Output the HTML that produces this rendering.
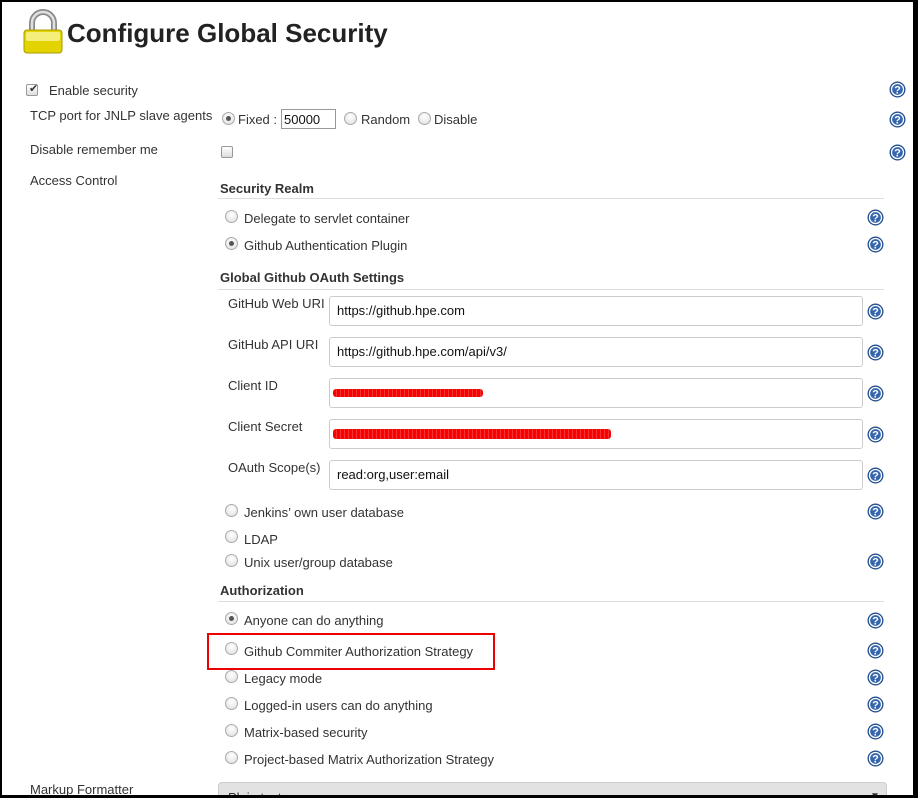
<!DOCTYPE html>
<html style="overflow:hidden"><head><meta charset="utf-8"><style>
html,body{overflow:hidden}
body{margin:0;width:918px;height:798px;overflow:hidden;background:#fff;font-family:"Liberation Sans",Arial,sans-serif;font-size:13px;color:#333;position:relative}
.frame{position:absolute;left:0;top:0;width:918px;height:798px;box-sizing:border-box;border:2px solid #000;border-right:5px solid #000;border-bottom:3px solid #000;z-index:10;pointer-events:none}
.a{position:absolute;white-space:nowrap;line-height:16px}
.b{font-weight:bold}
.hr{position:absolute;left:218px;width:666px;height:1px;background:#ddd}
.r{position:absolute;width:11px;height:11px;border-radius:50%;border:1px solid #aaa;background:radial-gradient(circle at 50% 35%,#fff,#ddd)}
.r.on::after{content:"";position:absolute;left:3px;top:3px;width:5px;height:5px;border-radius:50%;background:#555}
.cb{position:absolute;width:10px;height:10px;border:1px solid #999;border-radius:2px;background:linear-gradient(#fff,#ddd)}
.in{position:absolute;left:329px;height:28px;border:1px solid #ccc;border-radius:3px;box-sizing:content-box;line-height:28px;padding-left:7px;width:525px;color:#111}
.h{position:absolute;width:17px;height:17px}
.red{position:absolute;height:1px;background:repeating-linear-gradient(90deg,#f00 0 3px,#e33 3px 4px);}
</style></head><body>
<div class="frame"></div>
<svg style="position:absolute;left:22px;top:9px" width="42" height="46" viewBox="0 0 42 46">
<path d="M10 22V14a11 11 0 0 1 22 0v8" fill="none" stroke="#8a8a8a" stroke-width="6"/>
<path d="M10 22V14a11 11 0 0 1 22 0v8" fill="none" stroke="#e0e0e0" stroke-width="2.5"/>
<rect x="2" y="21" width="38" height="23" rx="3" fill="#e3d400" stroke="#a89a00"/>
<rect x="4" y="23" width="34" height="9" rx="2" fill="#f4ee7a"/>
</svg>
<div class="a b" style="left:67px;top:17px;font-size:26px;line-height:32px;color:#222">Configure Global Security</div>

<div class="cb" style="left:26px;top:84px"></div><div class="a" style="left:26px;top:81px;font-size:11px">&nbsp;✔</div>
<div class="a" style="left:49px;top:83px">Enable security</div>
<div class="a" style="left:30px;top:108px">TCP port for JNLP slave agents</div>
<div class="r on" style="left:222px;top:112px"></div><div class="a" style="left:238px;top:112px">Fixed :</div>
<div class="a" style="left:281px;top:109px;height:20px;border:1px solid #999;line-height:20px;padding-left:2px;box-sizing:border-box;width:55px;color:#111">50000</div>
<div class="r" style="left:344px;top:112px"></div><div class="a" style="left:361px;top:112px">Random</div>
<div class="r" style="left:418px;top:112px"></div><div class="a" style="left:434px;top:112px">Disable</div>
<div class="a" style="left:30px;top:142px">Disable remember me</div>
<div class="cb" style="left:221px;top:146px"></div>
<div class="a" style="left:30px;top:173px">Access Control</div>

<div class="a b" style="left:220px;top:181px">Security Realm</div><div class="hr" style="top:198px"></div>
<div class="r" style="left:225px;top:210px"></div><div class="a" style="left:244px;top:211px">Delegate to servlet container</div>
<div class="r on" style="left:225px;top:237px"></div><div class="a" style="left:244px;top:238px">Github Authentication Plugin</div>
<div class="a b" style="left:220px;top:270px">Global Github OAuth Settings</div><div class="hr" style="top:289px"></div>
<div class="a" style="left:228px;top:296px">GitHub Web URI</div><div class="in" style="top:296px">https://github.hpe.com</div>
<div class="a" style="left:228px;top:337px">GitHub API URI</div><div class="in" style="top:337px">https://github.hpe.com/api/v3/</div>
<div class="a" style="left:228px;top:378px">Client ID</div><div class="in" style="top:378px"></div>
<div class="red" style="left:333px;top:389px;width:150px;height:8px;border-radius:3px"></div>
<div class="a" style="left:228px;top:419px">Client Secret</div><div class="in" style="top:419px"></div>
<div class="red" style="left:333px;top:429px;width:278px;height:10px;border-radius:3px"></div>
<div class="a" style="left:228px;top:460px">OAuth Scope(s)</div><div class="in" style="top:460px">read:org,user:email</div>
<div class="r" style="left:225px;top:504px"></div><div class="a" style="left:244px;top:505px">Jenkins’ own user database</div>
<div class="r" style="left:225px;top:530px"></div><div class="a" style="left:244px;top:532px">LDAP</div>
<div class="r" style="left:225px;top:554px"></div><div class="a" style="left:244px;top:555px">Unix user/group database</div>

<div class="a b" style="left:220px;top:583px">Authorization</div><div class="hr" style="top:601px"></div>
<div class="r on" style="left:225px;top:612px"></div><div class="a" style="left:244px;top:613px">Anyone can do anything</div>
<div style="position:absolute;left:207px;top:633px;width:284px;height:33px;border:2px solid #e00"></div>
<div class="r" style="left:225px;top:642px"></div><div class="a" style="left:244px;top:644px">Github Commiter Authorization Strategy</div>
<div class="r" style="left:225px;top:670px"></div><div class="a" style="left:244px;top:671px">Legacy mode</div>
<div class="r" style="left:225px;top:697px"></div><div class="a" style="left:244px;top:698px">Logged-in users can do anything</div>
<div class="r" style="left:225px;top:724px"></div><div class="a" style="left:244px;top:725px">Matrix-based security</div>
<div class="r" style="left:225px;top:751px"></div><div class="a" style="left:244px;top:752px">Project-based Matrix Authorization Strategy</div>
<div class="a" style="left:30px;top:782px">Markup Formatter</div>
<div style="position:absolute;left:218px;top:782px;width:667px;height:14px;background:#e2e2e2;border:1px solid #ccc;border-bottom:none;border-radius:4px 4px 0 0"></div>
<div class="a" style="left:228px;top:790px">Plain text</div>
<div class="a" style="left:870px;top:789px;font-size:10px">▼</div>

<svg width="0" height="0" style="position:absolute"><defs><g id="q"><circle cx="8.5" cy="8.5" r="8" fill="#24508f"/><circle cx="8.5" cy="8.5" r="6" fill="#3565ad" stroke="#fff" stroke-width="1.3"/><text x="8.5" y="12.5" font-family="Liberation Sans" font-weight="bold" font-size="11" fill="#fff" text-anchor="middle">?</text></g></defs></svg>
<svg class="h" style="left:889px;top:81px"><use href="#q"/></svg>
<svg class="h" style="left:889px;top:111px"><use href="#q"/></svg>
<svg class="h" style="left:889px;top:144px"><use href="#q"/></svg>
<svg class="h" style="left:867px;top:209px"><use href="#q"/></svg>
<svg class="h" style="left:867px;top:236px"><use href="#q"/></svg>
<svg class="h" style="left:867px;top:303px"><use href="#q"/></svg>
<svg class="h" style="left:867px;top:344px"><use href="#q"/></svg>
<svg class="h" style="left:867px;top:385px"><use href="#q"/></svg>
<svg class="h" style="left:867px;top:426px"><use href="#q"/></svg>
<svg class="h" style="left:867px;top:467px"><use href="#q"/></svg>
<svg class="h" style="left:867px;top:503px"><use href="#q"/></svg>
<svg class="h" style="left:867px;top:553px"><use href="#q"/></svg>
<svg class="h" style="left:867px;top:612px"><use href="#q"/></svg>
<svg class="h" style="left:867px;top:642px"><use href="#q"/></svg>
<svg class="h" style="left:867px;top:669px"><use href="#q"/></svg>
<svg class="h" style="left:867px;top:696px"><use href="#q"/></svg>
<svg class="h" style="left:867px;top:723px"><use href="#q"/></svg>
<svg class="h" style="left:867px;top:750px"><use href="#q"/></svg>
</body></html>
